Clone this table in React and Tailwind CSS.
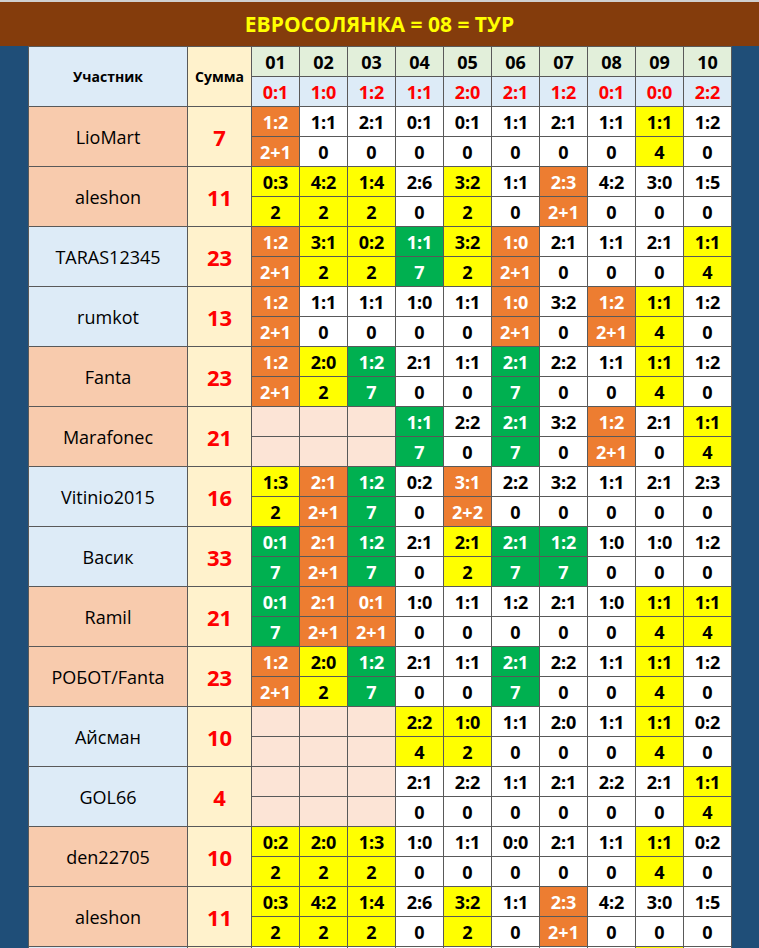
import React from "react";

const results = ["0:1", "1:0", "1:2", "1:1", "2:0", "2:1", "1:2", "0:1", "0:0", "2:2"];

// colours: O orange, Y yellow, G green, W white, E empty
const players = [
  { name: "LioMart", sum: 7, tone: "o", s: "1:2 1:1 2:1 0:1 0:1 1:1 2:1 1:1 1:1 1:2", p: "2+1 0 0 0 0 0 0 0 4 0", c: "OWWWWWWWYW" },
  { name: "aleshon", sum: 11, tone: "o", s: "0:3 4:2 1:4 2:6 3:2 1:1 2:3 4:2 3:0 1:5", p: "2 2 2 0 2 0 2+1 0 0 0", c: "YYYWYWOWWW" },
  { name: "TARAS12345", sum: 23, tone: "b", s: "1:2 3:1 0:2 1:1 3:2 1:0 2:1 1:1 2:1 1:1", p: "2+1 2 2 7 2 2+1 0 0 0 4", c: "OYYGYOWWWY" },
  { name: "rumkot", sum: 13, tone: "b", s: "1:2 1:1 1:1 1:0 1:1 1:0 3:2 1:2 1:1 1:2", p: "2+1 0 0 0 0 2+1 0 2+1 4 0", c: "OWWWWOWOYW" },
  { name: "Fanta", sum: 23, tone: "o", s: "1:2 2:0 1:2 2:1 1:1 2:1 2:2 1:1 1:1 1:2", p: "2+1 2 7 0 0 7 0 0 4 0", c: "OYGWWGWWYW" },
  { name: "Marafonec", sum: 21, tone: "o", s: "- - - 1:1 2:2 2:1 3:2 1:2 2:1 1:1", p: "- - - 7 0 7 0 2+1 0 4", c: "EEEGWGWOWY" },
  { name: "Vitinio2015", sum: 16, tone: "b", s: "1:3 2:1 1:2 0:2 3:1 2:2 3:2 1:1 2:1 2:3", p: "2 2+1 7 0 2+2 0 0 0 0 0", c: "YOGWOWWWWW" },
  { name: "Васик", sum: 33, tone: "b", s: "0:1 2:1 1:2 2:1 2:1 2:1 1:2 1:0 1:0 1:2", p: "7 2+1 7 0 2 7 7 0 0 0", c: "GOGWYGGWWW" },
  { name: "Ramil", sum: 21, tone: "o", s: "0:1 2:1 0:1 1:0 1:1 1:2 2:1 1:0 1:1 1:1", p: "7 2+1 2+1 0 0 0 0 0 4 4", c: "GOOWWWWWYY" },
  { name: "РОБОТ/Fanta", sum: 23, tone: "o", s: "1:2 2:0 1:2 2:1 1:1 2:1 2:2 1:1 1:1 1:2", p: "2+1 2 7 0 0 7 0 0 4 0", c: "OYGWWGWWYW" },
  { name: "Айсман", sum: 10, tone: "b", s: "- - - 2:2 1:0 1:1 2:0 1:1 1:1 0:2", p: "- - - 4 2 0 0 0 4 0", c: "EEEYYWWWYW" },
  { name: "GOL66", sum: 4, tone: "b", s: "- - - 2:1 2:2 1:1 2:1 2:2 2:1 1:1", p: "- - - 0 0 0 0 0 0 4", c: "EEEWWWWWWY" },
  { name: "den22705", sum: 10, tone: "o", s: "0:2 2:0 1:3 1:0 1:1 0:0 2:1 1:1 1:1 0:2", p: "2 2 2 0 0 0 0 0 4 0", c: "YYYWWWWWYW" },
  { name: "aleshon", sum: 11, tone: "o", s: "0:3 4:2 1:4 2:6 3:2 1:1 2:3 4:2 3:0 1:5", p: "2 2 2 0 2 0 2+1 0 0 0", c: "YYYWYWOWWW" },
  { name: "", sum: "", tone: "b", s: "- - - - - - - - - -", p: "- - - - - - - - - -", c: "WWWWWWWWYW" },
];

const fills = {
  O: "bg-[#ED7D31] text-white",
  Y: "bg-[#FFFF00] text-black",
  G: "bg-[#00B050] text-white",
  W: "bg-white text-black",
  E: "bg-[#FCE4D6]",
};

const cell = "border border-[#595959] p-0 text-center align-middle";

function PlayerRows({ pl }) {
  const scores = pl.s.split(" ");
  const points = pl.p.split(" ");
  const nameBg = pl.tone === "o" ? "bg-[#F8CBAD]" : "bg-[#DDEBF7]";
  return (
    <>
      <tr className="h-[30px]">
        <td rowSpan={2} className={`${cell} ${nameBg} text-[18px] text-black`}>
          {pl.name}
        </td>
        <td rowSpan={2} className={`${cell} bg-[#FFF2CC] text-[22px] font-bold text-[#FF0000]`}>
          {pl.sum}
        </td>
        {scores.map((v, i) => (
          <td key={i} className={`${cell} ${fills[pl.c[i]]} text-[18px] font-bold`}>
            {v === "-" ? "" : v}
          </td>
        ))}
      </tr>
      <tr className="h-[30px]">
        {points.map((v, i) => (
          <td key={i} className={`${cell} ${fills[pl.c[i]]} text-[18px] font-bold`}>
            {v === "-" ? "" : v}
          </td>
        ))}
      </tr>
    </>
  );
}

export default function App() {
  return (
    <div className="w-[759px] h-[948px] overflow-hidden bg-[#1F4E78] font-['Open_Sans',sans-serif]">
      <div className="h-[2px] bg-[#d0d0d0]" />
      <div className="h-[44px] bg-[#843C0C] flex items-center justify-center">
        <h1 className="text-[21px] font-bold text-[#FFFF00] leading-none">
          ЕВРОСОЛЯНКА = 08 = ТУР
        </h1>
      </div>
      <div className="pl-[28px]">
        <table className="table-fixed border-collapse w-[703px] leading-none">
          <colgroup>
            <col className="w-[159px]" />
            <col className="w-[64px]" />
            {results.map((_, i) => (
              <col key={i} className="w-[48px]" />
            ))}
          </colgroup>
          <thead>
            <tr className="h-[30px]">
              <th rowSpan={2} className={`${cell} bg-[#DDEBF7] text-[14px] font-bold text-black`}>
                Участник
              </th>
              <th rowSpan={2} className={`${cell} bg-[#FFF2CC] text-[14px] font-bold text-black`}>
                Сумма
              </th>
              {results.map((_, i) => (
                <th key={i} className={`${cell} bg-[#E2EFDA] text-[18px] font-bold text-black`}>
                  {String(i + 1).padStart(2, "0")}
                </th>
              ))}
            </tr>
            <tr className="h-[30px]">
              {results.map((r, i) => (
                <th key={i} className={`${cell} bg-[#DDEBF7] text-[18px] font-bold text-[#FF0000]`}>
                  {r}
                </th>
              ))}
            </tr>
          </thead>
          <tbody>
            {players.map((pl, i) => (
              <PlayerRows key={i} pl={pl} />
            ))}
          </tbody>
        </table>
      </div>
    </div>
  );
}
